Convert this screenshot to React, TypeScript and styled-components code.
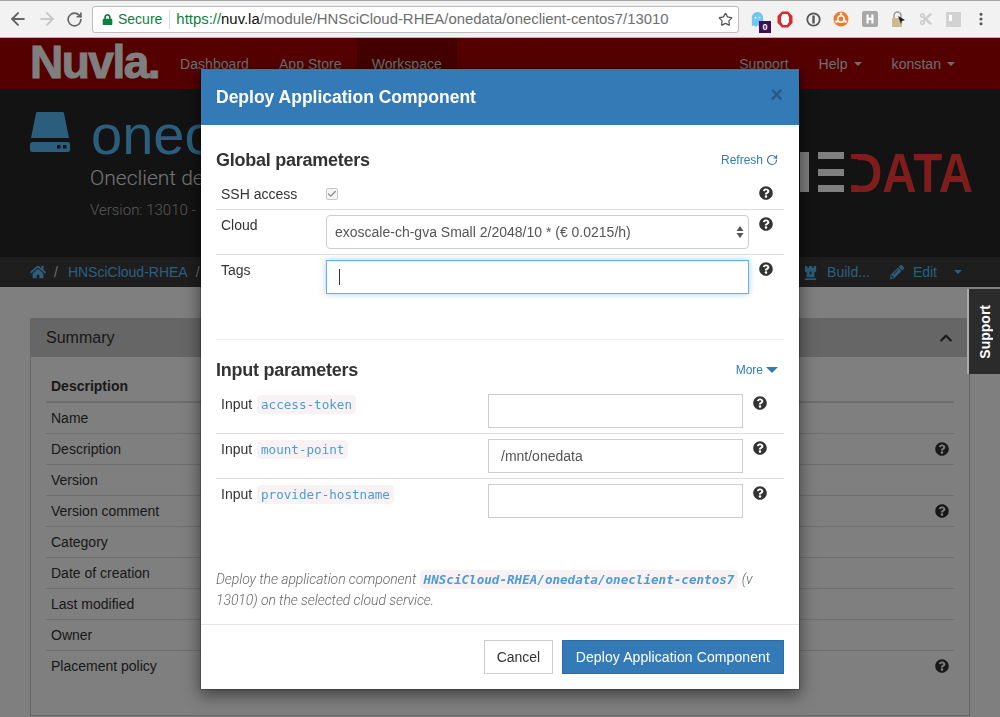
import * as React from "react"
import styled, { createGlobalStyle } from "styled-components"
import {
  FaHome, FaQuestionCircle, FaChessRook, FaPencilAlt, FaChevronUp,
  FaGhost, FaLock, FaCut,
} from "react-icons/fa"
import { ArrowLeft, ArrowRight, RotateCw, Star, Check, MoreVertical } from "lucide-react"

const blue = "#337ab7"
const dimBlue = "#56bdfa"

const GlobalStyle = createGlobalStyle`
  html, body {
    margin: 0;
    height: 717px;
    overflow: hidden;
    background: #fff;
    font-family: "Liberation Sans", Arial, sans-serif;
    font-size: 14px;
    line-height: 20px;
    color: #333;
  }
  * { box-sizing: border-box; }
`

const BrowserBar = styled.div`
  height: 38px;
  background: #f2f2f2;
  border-top: 1px solid #a3a5a8;
  border-bottom: 1px solid #b5b5b5;
  display: flex;
  align-items: center;
  padding: 0 11px 0 8px;
`
const NavIcons = styled.div`
  width: 84px;
  flex: none;
  display: flex;
  align-items: center;
  gap: 9px;
  color: #666;
`
const UrlBox = styled.div`
  width: 647px;
  height: 27px;
  flex: none;
  background: #fff;
  border: 1px solid #bcbcbc;
  border-radius: 3px;
  display: flex;
  align-items: center;
  padding: 0 5px 0 9px;
  font-size: 14.9px;
  color: #6e6e6e;
  white-space: nowrap;
`
const Secure = styled.span`
  display: flex;
  align-items: center;
  gap: 5px;
  font-size: 14px;
  color: #0b8043;
  padding-right: 7px;
  margin-right: 6px;
  border-right: 1px solid #dcdcdc;
  height: 19px;
`
const UrlGreen = styled.span`color: #0b8043;`
const UrlDark = styled.span`color: #111;`
const UrlPath = styled.span`flex: 1;`
const ExtIcons = styled.div`
  flex: 1;
  margin-left: 9px;
  display: flex;
  align-items: center;
  justify-content: space-between;
`
const ExtSlot = styled.span`
  position: relative;
  width: 18px;
  height: 18px;
  display: flex;
  align-items: center;
  justify-content: center;
`
const Badge = styled.span`
  position: absolute;
  right: -5px;
  bottom: -5px;
  width: 12px;
  height: 12px;
  background: #3e1052;
  color: #fff;
  font-size: 9px;
  font-weight: bold;
  line-height: 12px;
  text-align: center;
`

const TopNav = styled.nav`
  height: 51px;
  background: #aa0000;
  display: flex;
  align-items: stretch;
  padding: 0 30px;
`
const Logo = styled.div`
  width: 135px;
  font-size: 46px;
  line-height: 49px;
  font-weight: bold;
  letter-spacing: -1.5px;
  color: #fff;
  -webkit-text-stroke: 1px #fff;
`
const NavItem = styled.a<{ $active?: boolean }>`
  display: flex;
  align-items: center;
  gap: 6px;
  padding: 0 15px;
  color: #e0dcdc;
  letter-spacing: 0.05px;
  background: ${(p) => (p.$active ? "#880000" : "transparent")};
`
const Spacer = styled.div`flex: 1;`
const Triangle = styled.span<{ $half: number; $color: string }>`
  display: inline-block;
  width: 0;
  height: 0;
  border-top: ${(p) => p.$half}px solid ${(p) => p.$color};
  border-left: ${(p) => p.$half}px solid transparent;
  border-right: ${(p) => p.$half}px solid transparent;
`

const Hero = styled.header`
  height: 168px;
  background: #262626;
  padding: 0 24px 0 30px;
  display: flex;
  justify-content: space-between;
  overflow: hidden;
`
const HeroLeft = styled.div`
  display: flex;
  gap: 21px;
  padding-top: 23px;
  white-space: nowrap;
`
const HeroIcon = styled.svg`
  width: 40px;
  height: 40px;
  flex: none;
  color: ${dimBlue};
`
const HeroText = styled.div`
  font-family: Roboto, "Liberation Sans", sans-serif;
  font-weight: 300;
`
const Title = styled.h1`
  margin: 0;
  font-family: "Liberation Sans", sans-serif;
  font-size: 56px;
  line-height: 46px;
  font-weight: normal;
  color: ${dimBlue};
`
const Subtitle = styled.div`
  font-size: 21px;
  line-height: 30px;
  margin: 5px 0 0 -1px;
  color: #e8e8e8;
`
const Version = styled.div`
  font-size: 15px;
  line-height: 20px;
  margin: 7px 0 0 -1px;
  color: #b0b0b0;
`
const BrandMark = styled.svg`
  align-self: center;
  width: 176px;
  height: 44px;
  margin-top: -2px;
  overflow: visible;
`
const BrandText = styled.text`
  font-family: "Liberation Sans", sans-serif;
  font-weight: bold;
  font-size: 55px;
`

const Crumbs = styled.div`
  height: 30px;
  background: #3d3d3d;
  padding: 0 30px;
  display: flex;
  align-items: center;
  color: ${dimBlue};
`
const CrumbSep = styled.span`
  color: #d5d5d5;
  margin: 0 10px 0 8px;
`
const CrumbAction = styled.span<{ $gap: number }>`
  display: flex;
  align-items: center;
  gap: 9px;
  margin-right: ${(p) => p.$gap}px;
`
const CrumbHome = styled(FaHome)`
  width: 16px;
  height: 16px;
`
const CrumbCaret = styled(Triangle)`
  margin-right: 8px;
`

const Content = styled.main`
  padding: 31px 30px 0;
`
const Panel = styled.section`
  height: 398px;
  border: 1px solid #ccc;
`
const PanelHeading = styled.div`
  height: 38px;
  background: #ccc;
  padding: 0 15px;
  display: flex;
  align-items: center;
  justify-content: space-between;
  font-size: 16px;
  color: #333;
`
const PanelChevron = styled(FaChevronUp)`
  width: 14px;
  height: 14px;
  margin-right: 1px;
`
const Table = styled.div`
  padding: 19px 15px 0;
`
const TableHead = styled.div`
  height: 27px;
  padding: 0 5px;
  font-weight: bold;
  line-height: 20px;
  border-bottom: 2px solid #ddd;
`
const TableRow = styled.div`
  height: 31px;
  padding: 0 5px;
  display: flex;
  align-items: center;
  justify-content: space-between;
  border-bottom: 1px solid #ddd;
  &:last-child {
    height: 30px;
    border-bottom: none;
  }
`

const Backdrop = styled.div`
  position: fixed;
  left: 0;
  right: 0;
  top: 38px;
  bottom: 0;
  background: rgba(0, 0, 0, 0.5);
`
const SupportTab = styled.div`
  position: fixed;
  right: 0;
  top: 289px;
  width: 33px;
  height: 85px;
  background: #2b2b2b;
  border-left: 2px solid #ababab;
  display: flex;
  align-items: center;
  justify-content: center;
  color: #fff;
  font-weight: bold;
  writing-mode: vertical-rl;
`
const SupportLabel = styled.span`
  transform: rotate(180deg);
`

const Modal = styled.div`
  position: fixed;
  left: 200px;
  top: 68px;
  width: 600px;
  height: 622px;
  background: #fff;
  background-clip: padding-box;
  border: 1px solid rgba(0, 0, 0, 0.2);
  box-shadow: 0 5px 15px rgba(0, 0, 0, 0.5);
  display: flex;
  flex-direction: column;
`
const ModalHeader = styled.div`
  height: 56px;
  flex: none;
  background: ${blue};
  padding: 0 15px;
  display: flex;
  align-items: center;
  justify-content: space-between;
  color: #fff;
  font-size: 17.5px;
  font-weight: bold;
`
const CloseX = styled.span`
  font-size: 22px;
  color: rgba(0, 0, 0, 0.25);
  margin: 0 1px 4px 0;
`
const ModalBody = styled.div`
  flex: 1;
  padding: 25px 15px 0;
`
const SectionHead = styled.div`
  display: flex;
  align-items: center;
  justify-content: space-between;
  height: 20px;
  margin-bottom: 9px;
`
const SectionTitle = styled.h4`
  margin: 0;
  font-size: 18px;
  line-height: 20px;
  font-weight: bold;
  letter-spacing: -0.25px;
  color: #333;
`
const SectionLink = styled.a`
  display: flex;
  align-items: center;
  gap: 3px;
  font-size: 12px;
  color: ${blue};
  margin-right: 6px;
`
const Divider = styled.hr`
  border: 0;
  border-top: 1px solid #eee;
  margin: 40px 0 20px;
`
const GlobalRow = styled.div<{ $last?: boolean }>`
  display: grid;
  grid-template-columns: 105px 423px 1fr;
  padding: 5px;
  border-bottom: ${(p) => (p.$last ? "none" : "1px solid #ddd")};
`
const InputRow = styled.div<{ $last?: boolean }>`
  display: grid;
  grid-template-columns: 267px 255px 1fr;
  padding: 5px;
  border-bottom: ${(p) => (p.$last ? "none" : "1px solid #ddd")};
`
const Help = styled(FaQuestionCircle)`
  width: 14px;
  height: 14px;
  color: #333;
`
const RowHelp = styled(Help)`
  margin: 2px 0 0 10px;
`
const CheckBox = styled.span`
  width: 12px;
  height: 12px;
  margin-top: 4px;
  border: 1px solid #c8c8c8;
  border-radius: 2px;
  background: #f4f4f4;
  color: #8a8a8a;
  display: flex;
  align-items: center;
  justify-content: center;
`
const SelectBox = styled.div`
  height: 34px;
  border: 1px solid #ccc;
  border-radius: 4px;
  padding: 0 4px 0 8px;
  display: flex;
  align-items: center;
  justify-content: space-between;
  color: #555;
`
const TextInput = styled.input`
  display: block;
  width: 100%;
  height: 34px;
  border: 1px solid #ccc;
  padding: 0 12px;
  font: inherit;
  color: #555;
  outline: none;
`
const FocusedInput = styled.div`
  height: 34px;
  border: 1px solid #66afe9;
  box-shadow: inset 0 1px 1px rgba(0, 0, 0, 0.075), 0 0 6px rgba(102, 175, 233, 0.6);
  padding: 8px 12px;
`
const TextCaret = styled.span`
  display: block;
  width: 1px;
  height: 16px;
  background: #333;
`
const Code = styled.code<{ $bold?: boolean }>`
  font-family: "DejaVu Sans Mono", monospace;
  font-size: 12.6px;
  font-weight: ${(p) => (p.$bold ? "bold" : "normal")};
  letter-spacing: 0;
  color: #4a9cd8;
  background: #f9f2f4;
  padding: 2px 4px;
  border-radius: 4px;
  margin-left: ${(p) => (p.$bold ? "0" : "1px")};
`
const Note = styled.p`
  margin: 46px 0 0;
  font-family: Roboto, "Liberation Sans", sans-serif;
  font-weight: 300;
  font-style: italic;
  letter-spacing: -0.08px;
  color: #666;
`
const ModalFooter = styled.div`
  flex: none;
  border-top: 1px solid #e5e5e5;
  padding: 15px;
  display: flex;
  justify-content: flex-end;
  gap: 9px;
`
const Button = styled.button<{ $primary?: boolean }>`
  height: 34px;
  padding: 0 ${(p) => (p.$primary ? "13px" : "11.5px")};
  font: inherit;
  letter-spacing: ${(p) => (p.$primary ? "0.1px" : "0")};
  border: 1px solid ${(p) => (p.$primary ? "#2e6da4" : "#ccc")};
  background: ${(p) => (p.$primary ? blue : "#fff")};
  color: ${(p) => (p.$primary ? "#fff" : "#333")};
`

const summaryRows = [
  { label: "Name" },
  { label: "Description", help: true },
  { label: "Version" },
  { label: "Version comment", help: true },
  { label: "Category" },
  { label: "Date of creation" },
  { label: "Last modified" },
  { label: "Owner" },
  { label: "Placement policy", help: true },
]

const inputParams = [
  { name: "access-token", value: "" },
  { name: "mount-point", value: "/mnt/onedata" },
  { name: "provider-hostname", value: "" },
]

const SelectArrows = () => (
  <svg width="8" height="14" viewBox="0 0 8 14">
    <path d="M4 1 7.5 6H.5zM4 13 .5 8h7z" fill="#555" />
  </svg>
)

const Extensions = () => (
  <ExtIcons>
    <ExtSlot>
      <FaGhost size={15} color="#6fc7f0" />
      <Badge>0</Badge>
    </ExtSlot>
    <ExtSlot>
      <svg width="16" height="17" viewBox="0 0 16 17">
        <path d="M5 .5h6L15.5 5v7L11 16.5H5L.5 12V5z" fill="#e2262a" />
        <path d="M5.5 3h5l1.5 3v5l-2 3H6L4 11V6z" fill="#fff" />
      </svg>
    </ExtSlot>
    <ExtSlot>
      <svg width="15" height="15" viewBox="0 0 15 15">
        <circle cx="7.5" cy="7.5" r="6.2" fill="none" stroke="#555" strokeWidth="1.8" />
        <rect x="6.3" y="3.5" width="2.4" height="8" fill="#555" />
      </svg>
    </ExtSlot>
    <ExtSlot>
      <svg width="16" height="16" viewBox="0 0 16 16">
        <circle cx="8" cy="8" r="7.5" fill="#f47a2b" />
        <circle cx="8" cy="8" r="3.2" fill="none" stroke="#fff" strokeWidth="1.6" />
        <circle cx="8" cy="2.8" r="1.3" fill="#fff" />
        <circle cx="3.5" cy="10.6" r="1.3" fill="#fff" />
        <circle cx="12.5" cy="10.6" r="1.3" fill="#fff" />
      </svg>
    </ExtSlot>
    <ExtSlot>
      <svg width="16" height="16" viewBox="0 0 16 16">
        <rect width="16" height="16" rx="2" fill="#a8a8a8" />
        <path d="M4.5 3.5h2.2v3.3h2.6V3.5h2.2v9H9.3V8.9H6.7v3.6H4.5z" fill="#fff" />
      </svg>
    </ExtSlot>
    <ExtSlot>
      <svg width="18" height="18" viewBox="0 0 18 18">
        <path d="M5 8V5.5a3.5 3.5 0 0 1 7 0V8" fill="none" stroke="#999" strokeWidth="1.5" />
        <rect x="3" y="8" width="10" height="9" rx="1" fill="#cdb88f" />
        <path d="M9 6l7 4-3 1-1 3z" fill="#222" />
      </svg>
    </ExtSlot>
    <ExtSlot>
      <FaCut size={14} color="#cfcfcf" />
    </ExtSlot>
    <ExtSlot>
      <svg width="15" height="15" viewBox="0 0 15 15">
        <rect width="15" height="15" fill="#d2d2d2" />
        <rect x="3" y="3" width="3" height="6" fill="#fff" />
      </svg>
    </ExtSlot>
    <MoreVertical size={16} color="#555" strokeWidth={2.6} />
  </ExtIcons>
)

const App = () => {
  return (
    <>
      <GlobalStyle />
      <BrowserBar>
        <NavIcons>
          <ArrowLeft size={20} strokeWidth={2.4} />
          <ArrowRight size={20} strokeWidth={2.4} color="#c8c8c8" />
          <RotateCw size={17} strokeWidth={2.4} />
        </NavIcons>
        <UrlBox>
          <Secure>
            <FaLock size={11} />
            Secure
          </Secure>
          <UrlGreen>https://</UrlGreen>
          <UrlDark>nuv.la</UrlDark>
          <UrlPath>/module/HNSciCloud-RHEA/onedata/oneclient-centos7/13010</UrlPath>
          <Star size={15} color="#555" strokeWidth={2} />
        </UrlBox>
        <Extensions />
      </BrowserBar>

      <TopNav>
        <Logo>Nuvla.</Logo>
        <NavItem>Dashboard</NavItem>
        <NavItem>App Store</NavItem>
        <NavItem $active>Workspace</NavItem>
        <Spacer />
        <NavItem>Support</NavItem>
        <NavItem>Help <Triangle $half={4} $color="#e0dcdc" /></NavItem>
        <NavItem>konstan <Triangle $half={4} $color="#e0dcdc" /></NavItem>
      </TopNav>

      <Hero>
        <HeroLeft>
          <HeroIcon viewBox="0 0 40 40">
            <path d="M7.5 0h25a1.5 1.5 0 0 1 1.5 1.2L39 26H1L6 1.2A1.5 1.5 0 0 1 7.5 0z" fill="currentColor" />
            <rect y="30" width="40" height="10" rx="2.5" fill="currentColor" />
            <rect x="27" y="33" width="3.5" height="3.5" fill="#262626" />
            <rect x="33" y="33" width="3.5" height="3.5" fill="#262626" />
          </HeroIcon>
          <HeroText>
            <Title>onec</Title>
            <Subtitle>Oneclient de</Subtitle>
            <Version>Version: 13010 -</Version>
          </HeroText>
        </HeroLeft>
        <BrandMark viewBox="0 -2 176 44">
          <rect width="9" height="40" fill="#fff" />
          <rect x="18" width="26" height="7" fill="#fff" />
          <rect x="18" y="17" width="26" height="7" fill="#fff" />
          <rect x="18" y="33" width="26" height="7" fill="#fff" />
          <BrandText x="48" y="40" textLength="125" lengthAdjust="spacingAndGlyphs" fill="#ff3a3a">DATA</BrandText>
          <rect x="48" y="7" width="10" height="26" fill="#262626" />
        </BrandMark>
      </Hero>

      <Crumbs>
        <CrumbHome />
        <CrumbSep>/</CrumbSep>
        HNSciCloud-RHEA
        <CrumbSep>/</CrumbSep>
        <Spacer />
        <CrumbAction $gap={20}><FaChessRook size={15} /> Build...</CrumbAction>
        <CrumbAction $gap={17}><FaPencilAlt size={14} /> Edit</CrumbAction>
        <CrumbCaret $half={4} $color={dimBlue} />
      </Crumbs>

      <Content>
        <Panel>
          <PanelHeading>
            Summary
            <PanelChevron />
          </PanelHeading>
          <Table>
            <TableHead>Description</TableHead>
            {summaryRows.map((row) => (
              <TableRow key={row.label}>
                {row.label}
                {row.help && <Help />}
              </TableRow>
            ))}
          </Table>
        </Panel>
      </Content>

      <Backdrop />
      <SupportTab><SupportLabel>Support</SupportLabel></SupportTab>

      <Modal>
        <ModalHeader>
          Deploy Application Component
          <CloseX>×</CloseX>
        </ModalHeader>
        <ModalBody>
          <SectionHead>
            <SectionTitle>Global parameters</SectionTitle>
            <SectionLink>Refresh <RotateCw size={12} strokeWidth={2.4} /></SectionLink>
          </SectionHead>
          <GlobalRow>
            SSH access
            <CheckBox><Check size={10} strokeWidth={3} /></CheckBox>
            <RowHelp />
          </GlobalRow>
          <GlobalRow>
            Cloud
            <SelectBox>
              exoscale-ch-gva Small 2/2048/10 * (€ 0.0215/h)
              <SelectArrows />
            </SelectBox>
            <RowHelp />
          </GlobalRow>
          <GlobalRow $last>
            Tags
            <FocusedInput><TextCaret /></FocusedInput>
            <RowHelp />
          </GlobalRow>

          <Divider />

          <SectionHead>
            <SectionTitle>Input parameters</SectionTitle>
            <SectionLink>More <Triangle $half={6.5} $color={blue} /></SectionLink>
          </SectionHead>
          {inputParams.map((param, i) => (
            <InputRow key={param.name} $last={i === inputParams.length - 1}>
              <span>Input <Code>{param.name}</Code></span>
              <TextInput defaultValue={param.value} />
              <RowHelp />
            </InputRow>
          ))}
          <Note>
            <span>Deploy the application component</span> <Code $bold>HNSciCloud-RHEA/onedata/oneclient-centos7</Code> <span>(v</span> <span>13010) on the selected cloud service.</span>
          </Note>
        </ModalBody>
        <ModalFooter>
          <Button>Cancel</Button>
          <Button $primary>Deploy Application Component</Button>
        </ModalFooter>
      </Modal>
    </>
  )
}

export default App
